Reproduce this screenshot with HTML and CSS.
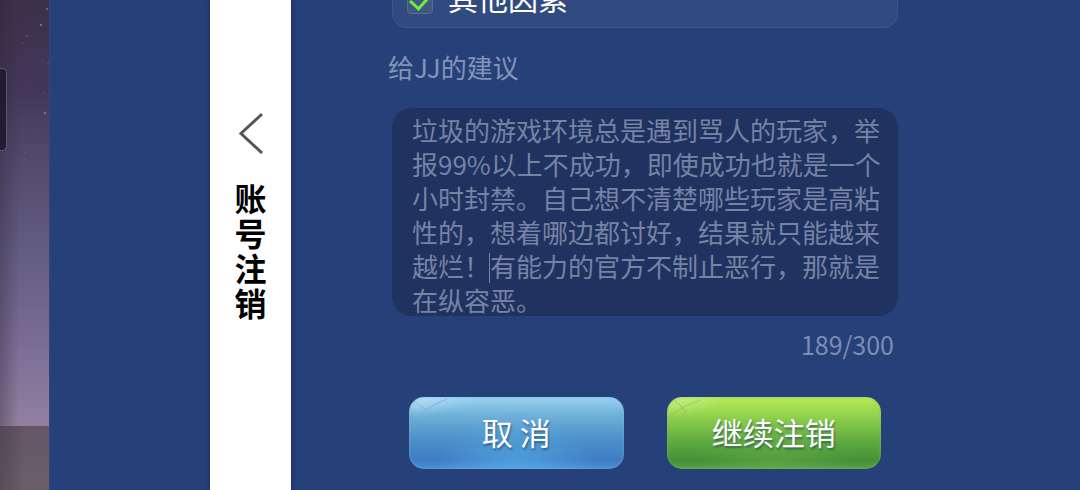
FILE: index.html
```html
<!DOCTYPE html>
<html lang="zh-CN">
<head>
    <meta charset="UTF-8">
    <meta name="viewport" content="width=device-width, initial-scale=1.0">
    <title>账号注销</title>
    <link rel="stylesheet" href="styles.css">
</head>
<body>
    <div class="page">
        <div class="scene">
            <div class="sky">
                <svg class="stars" width="49" height="180" viewBox="0 0 49 180" aria-hidden="true">
                    <g fill="#786f8e">
                        <circle cx="47" cy="9" r="1"/>
                        <circle cx="41" cy="25" r="1.2"/>
                        <circle cx="27" cy="36" r="0.8"/>
                        <circle cx="23" cy="43" r="0.6"/>
                        <circle cx="43" cy="60" r="0.6"/>
                        <circle cx="48" cy="63" r="0.6"/>
                        <circle cx="31" cy="85" r="0.4"/>
                        <circle cx="44" cy="93" r="0.6"/>
                        <circle cx="45" cy="113" r="1.2"/>
                        <circle cx="37" cy="132" r="0.5"/>
                        <circle cx="25" cy="153" r="0.6"/>
                        <circle cx="24" cy="159" r="0.6"/>
                    </g>
                </svg>
                <div class="tab"></div>
            </div>
            <div class="ground"></div>
        </div>

        <aside class="sidebar">
            <button class="back" type="button" aria-label="返回">
                <svg width="26" height="42" viewBox="0 0 26 42" fill="none" stroke="#555" stroke-width="3">
                    <path d="M24 2 L3 21.5 L24 41"/>
                </svg>
            </button>
            <h1 class="title">账号注销</h1>
        </aside>

        <main class="panel">
            <form class="form">
                <label class="option">
                    <input class="check" type="checkbox" checked>
                    <span class="option-text">其他因素</span>
                </label>

                <label class="form-label" for="advice">给JJ的建议</label>
                <div class="advice-box">
                    <textarea class="advice" id="advice" maxlength="300" spellcheck="false">垃圾的游戏环境总是遇到骂人的玩家，举报99%以上不成功，即使成功也就是一个小时封禁。自己想不清楚哪些玩家是高粘性的，想着哪边都讨好，结果就只能越来越烂！有能力的官方不制止恶行，那就是在纵容恶。</textarea>
                    <span class="caret"></span>
                </div>
                <div class="count">189/300</div>

                <div class="buttons">
                    <button class="btn btn-cancel" type="button">
                        <svg class="shine" width="50" height="30" viewBox="0 0 50 30" fill="none" stroke="#4f93b8" stroke-opacity="0.4" aria-hidden="true">
                            <path d="M5 4 L17 13 M17 13 Q26 6 38 2"/>
                        </svg>
                        取 消
                    </button>
                    <button class="btn btn-next" type="button">
                        <svg class="shine" width="50" height="30" viewBox="0 0 50 30" fill="none" stroke="#6fae3c" stroke-opacity="0.4" aria-hidden="true">
                            <path d="M7 3 Q15 8 19 16 M3 20 Q16 8 34 3"/>
                        </svg>
                        继续注销
                    </button>
                </div>
            </form>
        </main>
    </div>
</body>
</html>
```
FILE: styles.css
```css
* {
    box-sizing: border-box;
}

body {
    margin: 0;
    background-color: #264079;
    font-family: "Noto Sans CJK SC", sans-serif;
}

button,
textarea {
    font-family: inherit;
}

.page {
    display: flex;
    height: 100vh;
    overflow: hidden;
}

/* game background on the left */
.scene {
    display: flex;
    flex-direction: column;
    flex: 0 0 50px;
    margin-right: 160px;
    border-right: 1px solid #344679;
}

.sky {
    position: relative;
    flex: 87;
    background: linear-gradient(to right, rgba(45, 35, 50, 0.35), rgba(45, 35, 50, 0) 40%),
        linear-gradient(#3a3049, #43385a 22%, #51496b 37%, #635d82 60%, #7c6e96 82%, #93809f);
}

.ground {
    flex: 13;
    background: linear-gradient(to right, rgba(45, 35, 45, 0.3), rgba(45, 35, 45, 0) 50%),
        linear-gradient(#645666, #6a5f69);
}

.stars {
    display: block;
}

.tab {
    position: absolute;
    top: 68px;
    left: 0;
    width: 7px;
    height: 83px;
    background-color: #231c30;
    border: 1px solid #515978;
    border-left: none;
    border-radius: 0 5px 5px 0;
}

.sidebar {
    display: flex;
    flex-direction: column;
    align-items: center;
    flex: 0 0 81px;
    padding-top: 112px;
    background-color: #fff;
    box-shadow: 0 0 5px rgba(10, 20, 60, 0.5);
}

.back {
    padding: 0;
    border: none;
    background: none;
    cursor: pointer;
}

.back svg {
    display: block;
}

.title {
    width: 32px;
    margin: 26px 0 0;
    font-size: 32px;
    line-height: 35px;
    word-break: break-all;
    color: #000;
}

.panel {
    flex: 1;
    padding: 0 97px;
}

.form {
    display: flex;
    flex-direction: column;
    max-width: 514px;
    margin-top: -26px;
}

.option {
    display: flex;
    align-items: center;
    gap: 15px;
    height: 54px;
    margin: 0 4px;
    padding: 0 14px;
    background-color: #314b80;
    border: 1px solid #3c558a;
    border-radius: 14px;
    font-size: 30px;
    color: #fff;
}

.option-text {
    padding-bottom: 8px;
}

.check {
    display: flex;
    justify-content: center;
    appearance: none;
    width: 26px;
    height: 26px;
    margin: 0;
    background-color: #435783;
    border: 1px solid #566a93;
    border-radius: 4px;
}

.check:checked::before {
    content: "";
    width: 10px;
    height: 17px;
    border: solid #6fee3c;
    border-width: 0 3px 3px 0;
    transform: rotate(42deg);
}

.form-label {
    margin-top: 19px;
    font-size: 26px;
    line-height: 40px;
    color: #8494b8;
}

.advice-box {
    position: relative;
    margin: 21px 4px 0;
}

.advice {
    display: block;
    width: 100%;
    height: 208px;
    padding: 5px 16px 0 20px;
    background-color: #20325f;
    border: none;
    border-radius: 20px;
    outline: none;
    resize: none;
    overflow: hidden;
    font-size: 26px;
    line-height: 34px;
    color: #7583a4;
}

.caret {
    position: absolute;
    top: 145px;
    left: 97px;
    width: 1px;
    height: 30px;
    background-color: #7583a4;
}

.count {
    margin: 8px 8px 0;
    font-size: 25px;
    line-height: 40px;
    text-align: right;
    color: #7d8db3;
}

.buttons {
    display: flex;
    gap: 43px;
    margin: 33px 21px 0;
}

.btn {
    position: relative;
    flex: 1;
    height: 72px;
    padding: 0 0 4px;
    border: none;
    border-radius: 15px;
    font-size: 31px;
    color: #fff;
    text-shadow: 1px 2px 2px rgba(20, 50, 90, 0.5);
    cursor: pointer;
}

.shine {
    position: absolute;
    top: 0;
    left: 0;
}

.btn-cancel {
    background: radial-gradient(ellipse at 0 0, rgba(220, 240, 250, 0.5), rgba(220, 240, 250, 0) 20%),
        radial-gradient(ellipse at 50% 110%, rgba(90, 180, 235, 0.7), rgba(90, 180, 235, 0) 55%),
        linear-gradient(#9bd3f4, #6fb1d8 25%, #4a8fc8 60%, #3f7cc6 88%, #4a8ed4);
    box-shadow: inset 0 0 3px rgba(120, 180, 215, 0.8);
}

.btn-next {
    background: radial-gradient(ellipse at 0 0, rgba(220, 245, 190, 0.5), rgba(220, 245, 190, 0) 20%),
        radial-gradient(ellipse at 50% 110%, rgba(105, 175, 70, 0.6), rgba(105, 175, 70, 0) 55%),
        linear-gradient(#b9ea56, #8fd04c 28%, #5faa40 62%, #459038 88%, #56a046);
    box-shadow: inset 0 0 3px rgba(130, 190, 95, 0.8);
}
```
